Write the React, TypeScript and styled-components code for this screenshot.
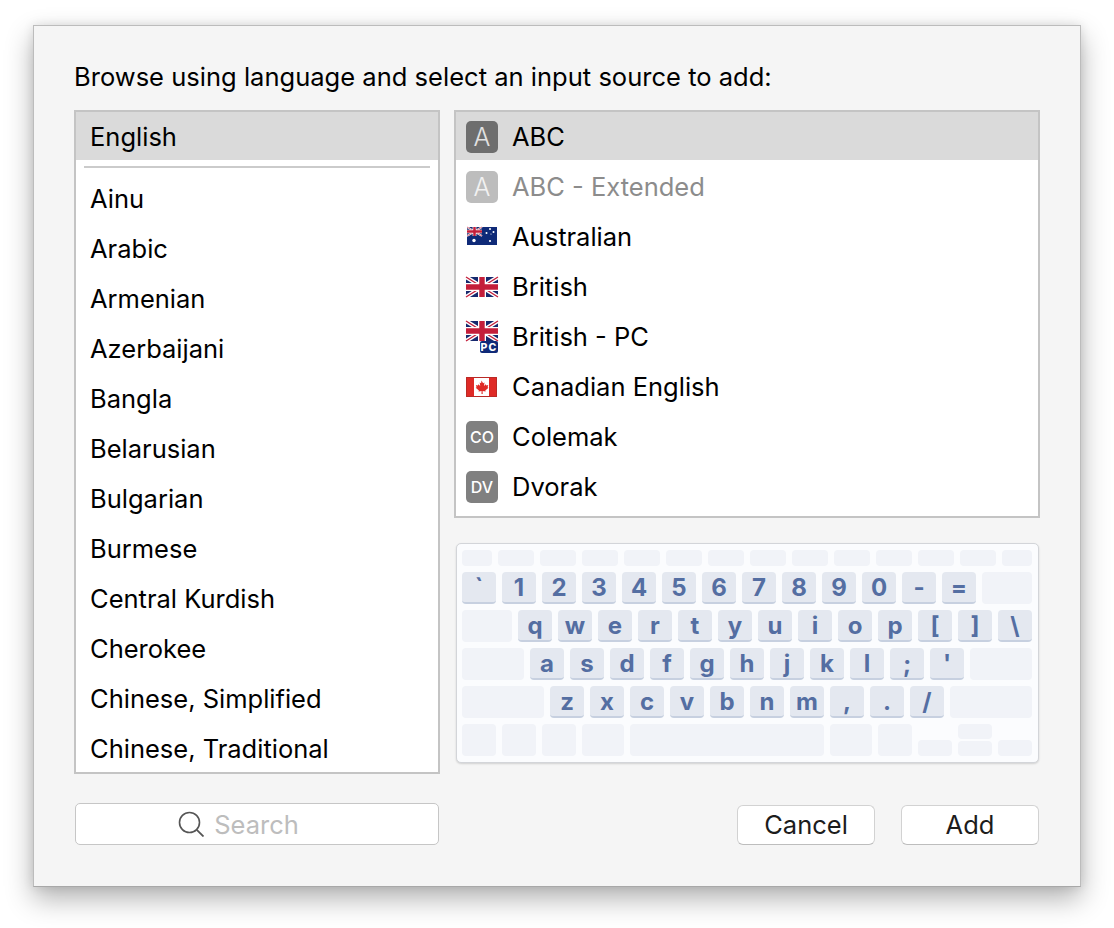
import React from "react";
import styled, { createGlobalStyle } from "styled-components";

const Global = createGlobalStyle`
  html, body { margin: 0; padding: 0; background: #fff; }
  body { font-family: Inter, "Noto Sans", "Liberation Sans", sans-serif; }
  * { box-sizing: border-box; }
`;

const Page = styled.div`
  width: 1114px;
  height: 928px;
  padding: 25px 33px 41px;
  overflow: hidden;
`;

const Panel = styled.div`
  width: 1048px;
  height: 862px;
  padding: 31px 40px 0;
  background: #f5f5f5;
  border: 1px solid #bcbcbc;
  border-bottom-color: #a8a8a8;
  box-shadow: 0 12px 26px rgba(0, 0, 0, 0.3), 0 0 10px rgba(0, 0, 0, 0.1);
`;

const Title = styled.div`
  height: 40px;
  margin-bottom: 13px;
  font-size: 25.5px;
  letter-spacing: 0.02px;
  line-height: 40px;
  color: #000;
  white-space: nowrap;
`;

const Columns = styled.div`
  display: grid;
  grid-template-columns: 366px 586px;
  column-gap: 14px;
  height: 664px;
`;

const ListBox = styled.div<{ $h: number }>`
  height: ${(p) => p.$h}px;
  background: #fff;
  border: 2px solid #c4c4c4;
  overflow: hidden;
`;

const Row = styled.div<{ $selected?: boolean; $muted?: boolean; $pad: number }>`
  display: flex;
  align-items: center;
  gap: 14px;
  height: 50px;
  padding-left: ${(p) => p.$pad}px;
  font-size: 25.5px;
  line-height: 50px;
  white-space: nowrap;
  color: ${(p) => (p.$muted ? "#8c8c8c" : "#000")};
  background: ${(p) =>
    p.$selected ? "linear-gradient(#dadada 48px, transparent 48px)" : "transparent"};
`;

const Divider = styled.div`
  height: 2px;
  margin: 4px 8px 6px;
  background: #cbcbcb;
`;

const Badge = styled.div<{ $bg: string; $small?: boolean; $fg?: string }>`
  display: flex;
  align-items: center;
  justify-content: center;
  width: 32px;
  height: 32px;
  flex: none;
  border-radius: 5px;
  background: ${(p) => p.$bg};
  color: ${(p) => p.$fg || "#fff"};
  font-size: ${(p) => (p.$small ? "16px" : "25px")};
  font-weight: ${(p) => (p.$small ? 500 : 300)};
  line-height: 32px;
`;

const FlagSvg = styled.svg`
  display: block;
  width: 32px;
  height: 32px;
  flex: none;
  overflow: visible;
`;

const RightColumn = styled.div`
  display: flex;
  flex-direction: column;
  gap: 25px;
`;

const Keyboard = styled.div`
  display: flex;
  flex-direction: column;
  gap: 6px;
  width: 583px;
  height: 220px;
  margin-left: 2px;
  padding: 6px 6px 6px 5px;
  background: #fbfcfe;
  border: 1px solid #d3d5d9;
  border-radius: 5px;
  box-shadow: 0 1px 2px rgba(0, 0, 0, 0.15);
`;

const KeyRow = styled.div`
  display: flex;
  gap: 6px;
`;

const Key = styled.div<{ $w: number; $h?: number; $on?: boolean }>`
  display: flex;
  align-items: center;
  justify-content: center;
  width: ${(p) => p.$w}px;
  height: ${(p) => p.$h ?? 32}px;
  flex: none;
  padding-top: ${(p) => (p.$on ? "1px" : "0")};
  border-radius: 4px;
  background: ${(p) => (p.$on ? "#e4e8f0" : "#f1f3f8")};
  border-bottom: ${(p) => (p.$on ? "2px solid #c7d0e0" : "none")};
  color: #546ea2;
  font-size: 24px;
  font-weight: 700;
  line-height: 29px;
`;

const ArrowStack = styled.div`
  display: flex;
  flex-direction: column;
  justify-content: flex-end;
  gap: 2px;
  width: 34px;
`;

const ArrowSide = styled.div`
  display: flex;
  align-items: flex-end;
`;

const Footer = styled.div`
  display: flex;
  align-items: flex-end;
  justify-content: space-between;
  height: 42px;
  margin-top: 29px;
  padding: 0 1px;
`;

const SearchField = styled.div`
  display: flex;
  align-items: center;
  justify-content: center;
  gap: 10px;
  width: 364px;
  height: 42px;
  padding-right: 37px;
  background: #fff;
  border: 1px solid #c6c6c6;
  border-radius: 5px;
  color: #bdbdbd;
  font-size: 25.5px;
`;

const Buttons = styled.div`
  display: flex;
  gap: 26px;
`;

const Button = styled.div`
  display: flex;
  align-items: center;
  justify-content: center;
  width: 138px;
  height: 40px;
  padding-bottom: 2px;
  background: #fff;
  border: 1px solid #d2d2d2;
  border-bottom-color: #bdbdbd;
  border-radius: 6px;
  color: #1c1c1c;
  font-size: 25.5px;
`;

const UnionJack = ({ x = 0, y = 0, w = 32, h = 20 }: { x?: number; y?: number; w?: number; h?: number }) => (
  <g transform={`translate(${x} ${y}) scale(${w / 32} ${h / 20})`}>
    <rect width="32" height="20" fill="#16296e" />
    <path d="M0 0L32 20M32 0L0 20" stroke="#fff" strokeWidth="4" />
    <path d="M0 0L32 20M32 0L0 20" stroke="#c41e3a" strokeWidth="1.4" />
    <path d="M16 0V20M0 10H32" stroke="#fff" strokeWidth="8" />
    <path d="M16 0V20M0 10H32" stroke="#c41e3a" strokeWidth="5.4" />
  </g>
);

const Australia = () => (
  <FlagSvg viewBox="0 0 32 32">
    <rect x="1" y="6" width="30" height="18" fill="#0f2a78" />
    <UnionJack x={1} y={6} w={15} h={9} />
    <g fill="#fff">
      <circle cx="8" cy="19.5" r="1.7" />
      <circle cx="24" cy="8" r="1" />
      <circle cx="20.5" cy="12" r="1" />
      <circle cx="27.5" cy="11" r="1" />
      <circle cx="24" cy="20" r="1.1" />
      <circle cx="25" cy="13" r="0.6" />
    </g>
  </FlagSvg>
);

const British = () => (
  <FlagSvg viewBox="0 0 32 32">
    <UnionJack y={6} />
  </FlagSvg>
);

const BritishPC = () => (
  <FlagSvg viewBox="0 0 32 32">
    <UnionJack y={0} />
    <rect x="14" y="20" width="18" height="12" rx="2" fill="#0f2a78" />
    <text x="23" y="30" textAnchor="middle" fontFamily="Inter, sans-serif" fontSize="10.5" fontWeight="800" letterSpacing="1.2" fill="#fff">
      PC
    </text>
  </FlagSvg>
);

const Canada = () => (
  <FlagSvg viewBox="0 0 32 32">
    <rect x="0" y="6" width="31" height="20" fill="#fff" />
    <rect x="0" y="6" width="8" height="20" fill="#df2a26" />
    <rect x="23" y="6" width="8" height="20" fill="#df2a26" />
    <path d="M0.5 6.5H30.5V25.5H0.5Z" fill="none" stroke="#b92a26" strokeWidth="1" />
    <path
      d="M15.5 9.5l1.6 2.8 1.4-.7-.5 3.5 1.8-1.8.5 1.2 2-.4-.7 2.2.9.5-3.2 2.6.4 1.2-3.1-.5.1 3h-1.2l.1-3-3.1.5.4-1.2-3.2-2.6.9-.5-.7-2.2 2 .4.5-1.2 1.8 1.8-.5-3.5 1.4.7z"
      fill="#df2a26"
    />
  </FlagSvg>
);

const SearchIcon = () => (
  <svg width="26" height="26" viewBox="0 0 26 26" fill="none" stroke="#555" strokeWidth="1.6">
    <circle cx="11.5" cy="11.5" r="10" />
    <path d="M18.8 18.8L25.5 25.5" strokeWidth="1.8" />
  </svg>
);

const languages = [
  "Ainu", "Arabic", "Armenian", "Azerbaijani", "Bangla", "Belarusian",
  "Bulgarian", "Burmese", "Central Kurdish", "Cherokee",
  "Chinese, Simplified", "Chinese, Traditional",
];

const sources: { name: string; icon: React.ReactNode; muted?: boolean; selected?: boolean }[] = [
  { name: "ABC", selected: true, icon: <Badge $bg="#6e6e6e" $fg="#e2e2e2">A</Badge> },
  { name: "ABC - Extended", muted: true, icon: <Badge $bg="#bdbdbd" $fg="#f2f2f2">A</Badge> },
  { name: "Australian", icon: <Australia /> },
  { name: "British", icon: <British /> },
  { name: "British - PC", icon: <BritishPC /> },
  { name: "Canadian English", icon: <Canada /> },
  { name: "Colemak", icon: <Badge $bg="#808080" $small>CO</Badge> },
  { name: "Dvorak", icon: <Badge $bg="#808080" $small>DV</Badge> },
];

const fnWidths = [30, 36, 36, 36, 36, 36, 36, 36, 36, 36, 36, 36, 36, 30];

const keyRows: { before?: number; keys: string[]; after?: number }[] = [
  { keys: "` 1 2 3 4 5 6 7 8 9 0 - =".split(" "), after: 50 },
  { before: 50, keys: "q w e r t y u i o p [ ] \\".split(" ") },
  { before: 62, keys: "a s d f g h j k l ; '".split(" "), after: 62 },
  { before: 82, keys: "z x c v b n m , . /".split(" "), after: 82 },
];

const bottomWidths = [34, 34, 34, 42, 194, 42, 34];

export default function App() {
  return (
    <Page>
      <Global />
      <Panel>
        <Title>Browse using language and select an input source to add:</Title>
        <Columns>
          <ListBox $h={664}>
            <Row $selected $pad={14}>English</Row>
            <Divider />
            {languages.map((l) => (
              <Row key={l} $pad={14}>{l}</Row>
            ))}
          </ListBox>
          <RightColumn>
            <ListBox $h={408}>
              {sources.map((s) => (
                <Row key={s.name} $pad={10} $selected={s.selected} $muted={s.muted}>
                  {s.icon}
                  {s.name}
                </Row>
              ))}
            </ListBox>
            <Keyboard>
              <KeyRow>
                {fnWidths.map((w, i) => (
                  <Key key={i} $w={w} $h={16} />
                ))}
              </KeyRow>
              {keyRows.map((r, i) => (
                <KeyRow key={i}>
                  {r.before ? <Key $w={r.before} /> : null}
                  {r.keys.map((k) => (
                    <Key key={k} $w={34} $on>{k}</Key>
                  ))}
                  {r.after ? <Key $w={r.after} /> : null}
                </KeyRow>
              ))}
              <KeyRow>
                {bottomWidths.map((w, i) => (
                  <Key key={i} $w={w} />
                ))}
                <ArrowSide>
                  <Key $w={34} $h={16} />
                </ArrowSide>
                <ArrowStack>
                  <Key $w={34} $h={15} />
                  <Key $w={34} $h={15} />
                </ArrowStack>
                <ArrowSide>
                  <Key $w={34} $h={16} />
                </ArrowSide>
              </KeyRow>
            </Keyboard>
          </RightColumn>
        </Columns>
        <Footer>
          <SearchField>
            <SearchIcon />
            Search
          </SearchField>
          <Buttons>
            <Button>Cancel</Button>
            <Button>Add</Button>
          </Buttons>
        </Footer>
      </Panel>
    </Page>
  );
}
